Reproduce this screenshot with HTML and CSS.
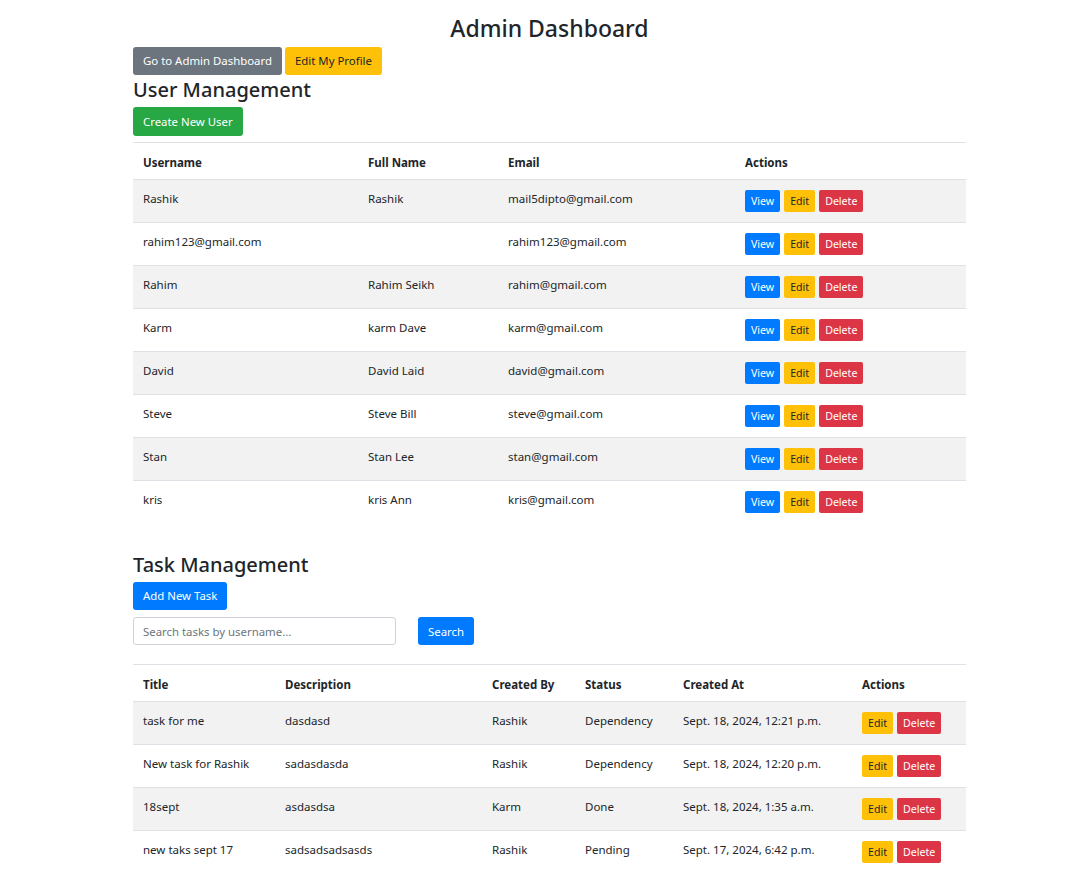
FILE: index.html
```html
<!DOCTYPE html>
<html>
<head>
<meta charset="utf-8">
<title>Admin Dashboard</title>
<link rel="stylesheet" href="styles.css">
</head>
<body>
<div class="container">
  <h1 class="title">Admin Dashboard</h1>
  <div class="top-actions">
    <a class="btn btn-secondary">Go to Admin Dashboard</a>
    <a class="btn btn-warning">Edit My Profile</a>
  </div>

  <h2 class="section-title">User Management</h2>
  <a class="btn btn-success">Create New User</a>
  <table class="table users">
    <colgroup><col class="c-user"><col class="c-full"><col class="c-email"><col></colgroup>
    <thead>
      <tr><th>Username</th><th>Full Name</th><th>Email</th><th>Actions</th></tr>
    </thead>
    <tbody>
      <tr><td>Rashik</td><td>Rashik</td><td>mail5dipto@gmail.com</td><td class="act-cell"><div class="acts"><a class="btn-sm btn-primary">View</a><a class="btn-sm btn-warning">Edit</a><a class="btn-sm btn-danger">Delete</a></div></td></tr>
      <tr><td>rahim123@gmail.com</td><td></td><td>rahim123@gmail.com</td><td class="act-cell"><div class="acts"><a class="btn-sm btn-primary">View</a><a class="btn-sm btn-warning">Edit</a><a class="btn-sm btn-danger">Delete</a></div></td></tr>
      <tr><td>Rahim</td><td>Rahim Seikh</td><td>rahim@gmail.com</td><td class="act-cell"><div class="acts"><a class="btn-sm btn-primary">View</a><a class="btn-sm btn-warning">Edit</a><a class="btn-sm btn-danger">Delete</a></div></td></tr>
      <tr><td>Karm</td><td>karm Dave</td><td>karm@gmail.com</td><td class="act-cell"><div class="acts"><a class="btn-sm btn-primary">View</a><a class="btn-sm btn-warning">Edit</a><a class="btn-sm btn-danger">Delete</a></div></td></tr>
      <tr><td>David</td><td>David Laid</td><td>david@gmail.com</td><td class="act-cell"><div class="acts"><a class="btn-sm btn-primary">View</a><a class="btn-sm btn-warning">Edit</a><a class="btn-sm btn-danger">Delete</a></div></td></tr>
      <tr><td>Steve</td><td>Steve Bill</td><td>steve@gmail.com</td><td class="act-cell"><div class="acts"><a class="btn-sm btn-primary">View</a><a class="btn-sm btn-warning">Edit</a><a class="btn-sm btn-danger">Delete</a></div></td></tr>
      <tr><td>Stan</td><td>Stan Lee</td><td>stan@gmail.com</td><td class="act-cell"><div class="acts"><a class="btn-sm btn-primary">View</a><a class="btn-sm btn-warning">Edit</a><a class="btn-sm btn-danger">Delete</a></div></td></tr>
      <tr><td>kris</td><td>kris Ann</td><td>kris@gmail.com</td><td class="act-cell"><div class="acts"><a class="btn-sm btn-primary">View</a><a class="btn-sm btn-warning">Edit</a><a class="btn-sm btn-danger">Delete</a></div></td></tr>
    </tbody>
  </table>

  <h2 class="section-title tasks-title">Task Management</h2>
  <a class="btn btn-primary">Add New Task</a>
  <form class="search">
    <input class="search-input" type="text" placeholder="Search tasks by username...">
    <button class="btn btn-primary search-btn" type="button">Search</button>
  </form>
  <table class="table tasks">
    <colgroup><col class="t-title"><col class="t-desc"><col class="t-by"><col class="t-status"><col class="t-at"><col></colgroup>
    <thead>
      <tr><th>Title</th><th>Description</th><th>Created By</th><th>Status</th><th>Created At</th><th>Actions</th></tr>
    </thead>
    <tbody>
      <tr><td>task for me</td><td>dasdasd</td><td>Rashik</td><td>Dependency</td><td>Sept. 18, 2024, 12:21 p.m.</td><td class="act-cell"><div class="acts"><a class="btn-sm btn-warning">Edit</a><a class="btn-sm btn-danger">Delete</a></div></td></tr>
      <tr><td>New task for Rashik</td><td>sadasdasda</td><td>Rashik</td><td>Dependency</td><td>Sept. 18, 2024, 12:20 p.m.</td><td class="act-cell"><div class="acts"><a class="btn-sm btn-warning">Edit</a><a class="btn-sm btn-danger">Delete</a></div></td></tr>
      <tr><td>18sept</td><td>asdasdsa</td><td>Karm</td><td>Done</td><td>Sept. 18, 2024, 1:35 a.m.</td><td class="act-cell"><div class="acts"><a class="btn-sm btn-warning">Edit</a><a class="btn-sm btn-danger">Delete</a></div></td></tr>
      <tr><td>new taks sept 17</td><td>sadsadsadsasds</td><td>Rashik</td><td>Pending</td><td>Sept. 17, 2024, 6:42 p.m.</td><td class="act-cell"><div class="acts"><a class="btn-sm btn-warning">Edit</a><a class="btn-sm btn-danger">Delete</a></div></td></tr>
    </tbody>
  </table>
</div>
</body>
</html>
```

FILE: styles.css
```css
* { box-sizing: border-box; }
html, body { margin: 0; padding: 0; background: #fff; }
body {
  font-family: "Noto Sans", "Open Sans", sans-serif;
  font-size: 11.5px;
  color: #212529;
}
.container {
  width: 833px;
  margin-left: 133px;
  padding-top: 12px;
}
.title {
  margin: 0;
  text-align: center;
  font-size: 23px;
  font-weight: 500;
  line-height: 32px;
  height: 35px;
}
.top-actions { display: flex; gap: 3px; }
.btn {
  display: inline-block;
  border-radius: 3px;
  padding: 0 10px;
  height: 28px;
  line-height: 28px;
  font-size: 11.4px;
  cursor: pointer;
  border: 0;
  font-family: inherit;
}
.btn-secondary { background: #6c757d; color: #fff; }
.btn-warning { background: #ffc107; color: #212529; }
.btn-success { background: #28a745; color: #fff; }
.btn-primary { background: #007bff; color: #fff; }
.btn-danger { background: #dc3545; color: #fff; }
.section-title {
  margin: 2px 0 4px;
  font-size: 20px;
  font-weight: 500;
  line-height: 26px;
}
.btn-success { height: 29px; line-height: 29px; }
.table {
  width: 100%;
  border-collapse: collapse;
  margin-top: 6px;
  table-layout: fixed;
}
.table th, .table td {
  text-align: left;
  padding: 8px 10px 12px;
  line-height: 22px;
  border-top: 1px solid #dee2e6;
  vertical-align: middle;
  font-size: 11.5px;
}
.table td.act-cell { padding: 10px 10px; }
.table th {
  font-weight: 700;
  padding: 9px 10px 5px;
  border-bottom: 1px solid #dee2e6;
}
.table tbody tr:nth-child(odd) { background: #f2f2f2; }
.c-user { width: 225px; }
.c-full { width: 140px; }
.c-email { width: 237px; }
.t-title { width: 142px; }
.t-desc { width: 207px; }
.t-by { width: 93px; }
.t-status { width: 98px; }
.t-at { width: 179px; }
.acts { display: flex; gap: 4px; height: 22px; }
.btn-sm {
  display: block;
  height: 22px;
  line-height: 22px;
  padding: 0 6px;
  border-radius: 2px;
  font-size: 10.6px;
}
.tasks-title { margin-top: 29px; }
.search {
  display: flex;
  gap: 22px;
  margin-top: 7px;
  margin-bottom: 19px;
}
.search-input {
  width: 263px;
  height: 28px;
  border: 1px solid #ced4da;
  border-radius: 3px;
  padding: 0 9px;
  font-family: inherit;
  font-size: 11.4px;
  color: #495057;
}
.search-input::placeholder { color: #6c757d; }
.search-btn { width: 56px; padding: 0; text-align: center; line-height: 30px; }
```
